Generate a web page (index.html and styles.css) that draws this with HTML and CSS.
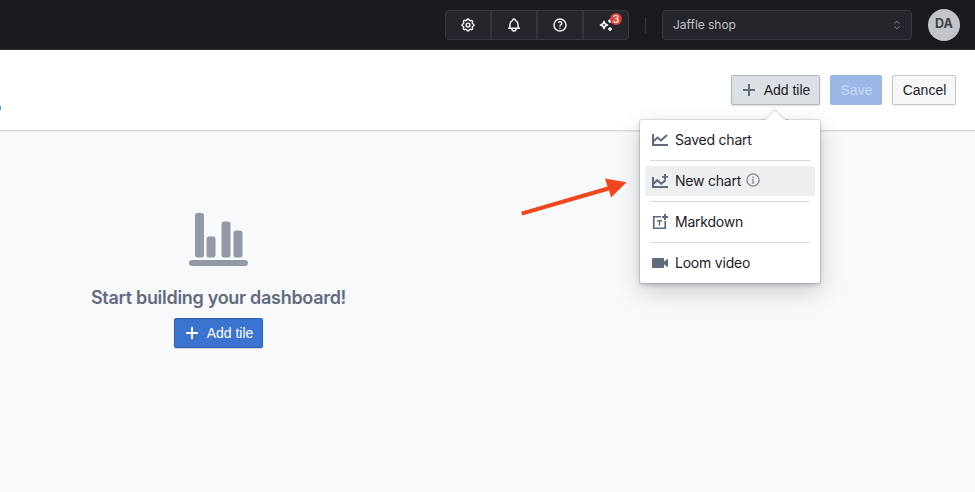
FILE: index.html
```
<!DOCTYPE html>
<html lang="en">
<head>
<meta charset="utf-8">
<title>Dashboard</title>
<link rel="stylesheet" href="styles.css">
</head>
<body>
<header class="navbar">
  <div class="nav-group">
    <button class="nav-btn" aria-label="Settings">
      <svg width="16" height="16" viewBox="0 0 24 24" fill="none" stroke="currentColor" stroke-width="2.2" stroke-linejoin="round"><path d="M10.3 4.3c.4-1.8 3-1.8 3.4 0a1.7 1.7 0 0 0 2.6 1.1c1.5-1 3.3.8 2.4 2.3a1.7 1.7 0 0 0 1 2.6c1.8.4 1.8 3 0 3.4a1.7 1.7 0 0 0-1 2.6c.9 1.5-.9 3.3-2.4 2.4a1.7 1.7 0 0 0-2.6 1c-.4 1.8-3 1.8-3.4 0a1.7 1.7 0 0 0-2.6-1c-1.5.9-3.3-.9-2.4-2.4a1.7 1.7 0 0 0-1-2.6c-1.8-.4-1.8-3 0-3.4a1.7 1.7 0 0 0 1-2.6c-.9-1.5.9-3.3 2.4-2.4a1.7 1.7 0 0 0 2.6-1z"/><circle cx="12" cy="12" r="2.8"/></svg>
    </button>
    <button class="nav-btn" aria-label="Notifications">
      <svg width="16" height="16" viewBox="0 0 24 24" fill="none" stroke="currentColor" stroke-width="2.2" stroke-linejoin="round" stroke-linecap="round"><path d="M10 5a2 2 0 0 1 4 0a7 7 0 0 1 4 6v3a4 4 0 0 0 2 3H4a4 4 0 0 0 2-3v-3a7 7 0 0 1 4-6M9 17v1a3 3 0 0 0 6 0v-1"/></svg>
    </button>
    <button class="nav-btn" aria-label="Help">
      <svg width="16" height="16" viewBox="0 0 24 24" fill="none" stroke="currentColor" stroke-width="2.2" stroke-linejoin="round" stroke-linecap="round"><circle cx="12" cy="12" r="9"/><path d="M12 17v.01M12 13.5a1.5 1.5 0 0 1 1-1.5a2.6 2.6 0 1 0-3-4"/></svg>
    </button>
    <button class="nav-btn" aria-label="Updates">
      <svg width="16" height="16" viewBox="0 0 24 24" fill="none" stroke="currentColor" stroke-width="2.2" stroke-linejoin="round"><path d="M9 6.5c.5 3.500 2 5 5.500 5.500c-3.500.5-5 2-5.500 5.500c-.5-3.500-2-5-5.500-5.500c3.500-.5 5-2 5.500-5.500z"/><path d="M18 4l2 2l-2 2l-2-2zM18 16l2 2l-2 2l-2-2z" fill="currentColor"/></svg>
      <span class="badge">3</span>
    </button>
  </div>
  <span class="nav-divider"></span>
  <div class="project-select">
    <span>Jaffle shop</span>
    <svg width="8" height="10" viewBox="0 0 8 10" fill="none" stroke="currentColor"><path d="M1.500 3.500L4 1.200l2.500 2.300M1.500 6.500L4 8.800l2.500-2.300"/></svg>
  </div>
  <div class="avatar">DA</div>
</header>

<section class="toolbar">
  <span class="edge-dot"></span>
  <div class="popover-anchor">
    <button class="btn btn-active">
      <svg class="plus" width="12" height="12" viewBox="0 0 12 12"><path d="M5 0h2v5h5v2H7v5H5V7H0V5h5z" fill="currentColor"/></svg>
      <span>Add tile</span>
    </button>
    <div class="popover">
      <svg class="popover-arrow" width="30" height="12" viewBox="0 0 30 12"><path d="M2 11c3 0 4.500-1 6-2.500L13.500 2q1.500-1.500 3 0L22 8.500c1.500 1.500 3 2.500 6 2.500v1H2z" fill="#fff"/><path d="M2 10.500c3 0 4.500-1 6-2.500L13.500 1.500q1.500-1.500 3 0L22 8c1.500 1.500 3 2.500 6 2.500" fill="none" stroke="#111418" stroke-opacity=".18"/></svg>
      <div class="menu-item">
        <svg width="16" height="16" viewBox="0 0 16 16"><path d="M0 2h2v10h14v2H0z" fill="currentColor"/><path d="M2 9l3.500-3.500L9 8.500l6-5.500" fill="none" stroke="currentColor" stroke-width="2"/></svg>
        <span class="menu-label">Saved chart</span>
      </div>
      <div class="menu-divider"></div>
      <div class="menu-item menu-item-hover">
        <svg width="16" height="16" viewBox="0 0 16 16"><path d="M0 4h2v9h14v2H0zM12 1h2v2h2v1.700h-2v2h-2v-2h-2V3h2z" fill="currentColor"/><path d="M1.500 10.800l3.700-3.600l4 3.600l4.300-3.600" fill="none" stroke="currentColor" stroke-width="2"/></svg>
        <span class="menu-label">New chart</span>
        <svg class="info" width="14" height="14" viewBox="0 0 14 14"><circle cx="7" cy="7" r="6.100" fill="none" stroke="currentColor" stroke-width="1.300"/><path d="M6.300 3.500h1.400v1.400H6.300zM5.800 6h1.800v3.500h.6v.9H5.800v-.9h.6V6.900h-.6z" fill="currentColor"/></svg>
      </div>
      <div class="menu-divider"></div>
      <div class="menu-item">
        <svg width="16" height="16" viewBox="0 0 16 16"><path d="M9 2.750H1.750v11.500h11.500V7" fill="none" stroke="currentColor" stroke-width="1.700"/><path d="M12 0h2v2h2v2h-2v2h-2V4h-2V2h2zM5 6h5v1.400H8.200V11.500H6.800V7.400H5z" fill="currentColor"/></svg>
        <span class="menu-label">Markdown</span>
      </div>
      <div class="menu-divider"></div>
      <div class="menu-item">
        <svg width="16" height="16" viewBox="0 0 16 16"><rect y="3" width="12" height="10" rx="1" fill="currentColor"/><path d="M12 6.800l2.800-2.500q1.200-.6 1.200.4v6.600q0 1-1.200.4L12 9.200z" fill="currentColor"/></svg>
        <span class="menu-label">Loom video</span>
      </div>
    </div>
  </div>
  <button class="btn btn-save">Save</button>
  <button class="btn btn-cancel">Cancel</button>
</section>

<main class="content">
  <div class="empty-state">
    <svg class="chart-icon" width="59" height="54" viewBox="0 0 59 54" fill="currentColor"><rect x="6" width="9" height="44.500" rx="2.500"/><rect x="17.500" y="23.500" width="9" height="21" rx="2.500"/><rect x="32.500" y="8.500" width="9" height="36" rx="2.500"/><rect x="44.500" y="17.500" width="9" height="27" rx="2.500"/><rect y="47" width="59" height="6" rx="3"/></svg>
    <h1 class="empty-title">Start building your dashboard!</h1>
    <button class="btn btn-primary">
      <svg class="plus" width="12" height="12" viewBox="0 0 12 12"><path d="M5 0h2v5h5v2H7v5H5V7H0V5h5z" fill="currentColor"/></svg>
      <span>Add tile</span>
    </button>
  </div>
  <svg class="pointer" width="110" height="42" viewBox="0 0 110 42"><path d="M1 34.800L87.500 9.600L85 1.500L106.500 5.200L91 20.500L89 13.500L2.300 38.600z" fill="#f1471d"/></svg>
</main>
</body>
</html>
```

FILE: styles.css
```
* { box-sizing: border-box; }

body {
  margin: 0;
  height: 492px;
  display: flex;
  flex-direction: column;
  overflow: hidden;
  background: #f8f9fb;
  color: #1c2127;
  font-family: Inter, "Liberation Sans", sans-serif;
  font-size: 14px;
}

button { font: inherit; margin: 0; }
svg { display: block; flex: none; }

.navbar {
  height: 50px;
  flex: none;
  display: flex;
  align-items: center;
  justify-content: flex-end;
  padding-right: 15px;
  background: #1a1b1e;
  border-bottom: 1px solid #2c2e33;
}

.nav-group {
  display: flex;
  width: 184px;
  height: 30px;
  border: 1px solid #373a40;
  border-radius: 4px;
  background: #25262b;
}

.nav-btn {
  position: relative;
  flex: 1;
  display: flex;
  align-items: center;
  justify-content: center;
  padding: 0;
  border: 0;
  background: none;
  color: #f1f3f5;
}

.nav-btn + .nav-btn { border-left: 2px solid #34363b; }

.badge {
  position: absolute;
  top: 2px;
  right: 6px;
  width: 12px;
  height: 12px;
  border-radius: 50%;
  background: #e03e36;
  color: #fff;
  font-size: 11px;
  font-weight: 500;
  line-height: 12px;
  text-align: center;
}

.nav-divider {
  width: 1px;
  height: 16px;
  margin: 0 16px;
  background: #373a40;
}

.project-select {
  width: 250px;
  height: 30px;
  display: flex;
  align-items: center;
  justify-content: space-between;
  padding: 0 10px;
  border: 1px solid #373a40;
  border-radius: 4px;
  background: #25262b;
  color: #c1c2c5;
  font-size: 12px;
  letter-spacing: -0.03px;
}

.project-select svg { color: #7d8087; }

.avatar {
  width: 32px;
  height: 32px;
  margin-left: 16px;
  border-radius: 50%;
  background: #c1c4c8;
  color: #3d4045;
  font-size: 12.5px;
  font-weight: 700;
  line-height: 29px;
  text-align: center;
}

.toolbar {
  position: relative;
  height: 81px;
  flex: none;
  display: flex;
  align-items: center;
  justify-content: flex-end;
  gap: 10px;
  padding-right: 19px;
  background: #fff;
  border-bottom: 1px solid #d9dadd;
  box-shadow: 0 1px 1px rgba(17, 20, 24, 0.06);
}

.edge-dot {
  position: absolute;
  left: -4px;
  top: 55px;
  width: 5px;
  height: 6px;
  border-radius: 2px;
  background: #4a9be8;
}

.btn {
  height: 30px;
  display: flex;
  align-items: center;
  justify-content: center;
  padding: 0 0 0 1px;
  border: 1px solid #c3c6ca;
  border-radius: 2px;
  font-family: "Liberation Sans", Arial, sans-serif;
  font-size: 14px;
  color: #1c2127;
}

.plus { margin-right: 9px; }

.btn-active {
  width: 89px;
  padding-left: 2px;
  border-color: #b3b7bd;
  background: #dce0e5;
  box-shadow: 0 1px 2px rgba(17, 20, 24, 0.15);
}

.btn-active .plus { color: #5f6b7c; }

.btn-save {
  width: 52px;
  border: 0;
  background: #9bb7e5;
  color: #c9d9f2;
}

.btn-cancel {
  width: 64px;
  background: #f6f7f9;
  box-shadow: 0 1px 2px rgba(17, 20, 24, 0.08);
}

.btn-primary {
  width: 89px;
  padding-left: 2px;
  border-color: #2d5fae;
  background: #3b73d1;
  color: #fff;
  box-shadow: 0 1px 1px rgba(17, 20, 24, 0.15);
}

.popover-anchor { position: relative; z-index: 2; }

.popover {
  position: absolute;
  top: 45px;
  right: 0;
  width: 180px;
  padding: 5px;
  border-radius: 2px;
  background: #fff;
  box-shadow: 0 0 0 1px rgba(17, 20, 24, 0.1), 0 2px 4px rgba(17, 20, 24, 0.2), 0 8px 24px rgba(17, 20, 24, 0.2);
}

.popover-arrow {
  position: absolute;
  top: -11px;
  left: 120px;
}

.menu-item {
  height: 30px;
  display: flex;
  align-items: center;
  padding: 0 7px;
  border-radius: 2px;
  white-space: nowrap;
}

.menu-item svg { margin-right: 7px; color: #5f6b7c; }
.menu-label { padding-bottom: 2px; letter-spacing: -0.22px; }
.menu-item-hover { background: #eeeff1; }
.menu-item .info { margin: 0 0 2px 5px; color: #858c98; }

.menu-divider {
  height: 1px;
  margin: 5px;
  background: #d8d9db;
}

.content {
  position: relative;
  flex: 1;
}

.empty-state {
  width: 437px;
  display: flex;
  flex-direction: column;
  align-items: center;
  padding-top: 82px;
}

.chart-icon { color: #9299a7; }

.empty-title {
  margin: 20px 0 9px;
  font-size: 18px;
  font-weight: 600;
  line-height: 22px;
  letter-spacing: -0.3px;
  color: #626b7d;
  white-space: nowrap;
}

.pointer {
  position: absolute;
  left: 520px;
  top: 46px;
}
```
